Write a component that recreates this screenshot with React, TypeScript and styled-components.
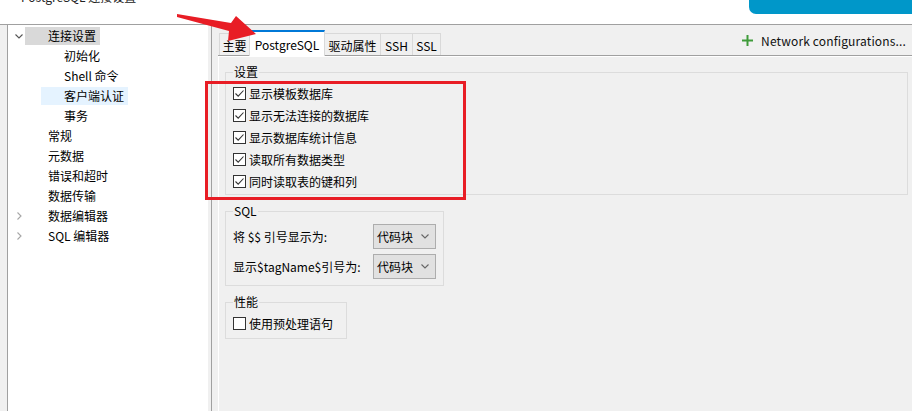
import React from 'react'
import styled, { createGlobalStyle } from 'styled-components'

const GlobalStyle = createGlobalStyle`
    html, body {
        margin: 0;
        padding: 0;
        background: #f0f0f0;
    }
    body {
        font-family: "Noto Sans CJK SC", "Noto Sans", sans-serif;
        font-size: 12px;
        color: #000;
    }
`

const Page = styled.div`
    position: relative;
    width: 912px;
    height: 411px;
    overflow: hidden;
    display: flex;
    flex-direction: column;
    background: #f0f0f0;
`

const Header = styled.div`
    height: 24px;
    flex: none;
    display: flex;
    align-items: flex-start;
    overflow: hidden;
    background: #fff;
    border-bottom: 1px solid #a0a0a0;
`

const Title = styled.div`
    margin: -11px 0 0 21px;
    line-height: 16px;
    color: #222;
`

const Banner = styled.div`
    margin-left: auto;
    width: 163px;
    height: 14px;
    background: #0097c9;
    border-bottom-left-radius: 7px;
`

const Main = styled.div`
    flex: 1;
    display: flex;
    min-height: 0;
`

const Gutter = styled.div`
    width: 7px;
    flex: none;
`

const Tree = styled.div`
    width: 200px;
    flex: none;
    background: #fff;
    border-left: 1px solid #a0a0a0;
    padding-top: 1px;
`

const TreeRow = styled.div<{ $level: number }>`
    height: 20px;
    display: flex;
    align-items: center;
    padding-left: ${(p) => 7 + p.$level * 16}px;
`

const Twisty = styled.span`
    width: 10px;
    height: 20px;
    flex: none;
    display: flex;
    align-items: center;
`

const TreeLabel = styled.span<{ $sel?: 'focus' | 'blur' }>`
    height: 18px;
    line-height: 18px;
    padding: 0 4px 0 23px;
    white-space: nowrap;
    background: ${(p) => (p.$sel === 'blur' ? '#d9d9d9' : p.$sel === 'focus' ? '#e5f3ff' : 'transparent')};
`

const Sash = styled.div`
    width: 10px;
    flex: none;
    background: linear-gradient(to right, #f0f0f0 3px, #a0a0a0 3px, #a0a0a0 4px, #f0f0f0 4px);
`

const Editor = styled.div`
    flex: 1;
    display: flex;
    flex-direction: column;
    min-width: 0;
`

const TabBar = styled.div`
    height: 30px;
    flex: none;
    display: flex;
    align-items: flex-end;
    padding-left: 2px;
    border-bottom: 1px solid #a0a0a0;
`

const Tab = styled.div<{ $active?: boolean; $w: number }>`
    width: ${(p) => p.$w}px;
    box-sizing: border-box;
    height: ${(p) => (p.$active ? 26 : 22)}px;
    margin-bottom: ${(p) => (p.$active ? -1 : 0)}px;
    margin-left: -1px;
    display: flex;
    align-items: center;
    justify-content: center;
    padding-top: ${(p) => (p.$active ? 0 : 1)}px;
    border: 1px solid #d9d9d9;
    border-bottom: none;
    border-top: ${(p) => (p.$active ? '2px solid #0078d7' : '1px solid #d9d9d9')};
    background: ${(p) => (p.$active ? '#fff' : '#f0f0f0')};
    position: ${(p) => (p.$active ? 'relative' : 'static')};
    white-space: nowrap;
`

const NetButton = styled.div`
    margin-left: auto;
    align-self: center;
    display: flex;
    align-items: center;
    gap: 8px;
    padding-right: 6px;
    color: #111;
    letter-spacing: 0.15px;
`

const TabBody = styled.div`
    flex: 1;
    display: flex;
    flex-direction: column;
    align-items: flex-start;
    gap: 8px;
    border-top: 1px solid #fff;
    border-left: 1px solid #fff;
    padding: 7px 4px 0 6px;
`

const Group = styled.fieldset<{ $w?: number; $gap?: number }>`
    margin: 0;
    margin-top: ${(p) => p.$gap ?? 0}px;
    padding: 0 7px;
    border: 1px solid #dcdcdc;
    box-sizing: border-box;
    width: ${(p) => (p.$w ? `${p.$w}px` : '100%')};
    align-self: ${(p) => (p.$w ? 'flex-start' : 'stretch')};
    min-inline-size: 0;
`

const Legend = styled.legend`
    padding: 0 1px;
    line-height: 16px;
    font-size: 12px;
`

const Rows = styled.div<{ $pt: number; $pb: number }>`
    display: flex;
    flex-direction: column;
    padding: ${(p) => p.$pt}px 0 ${(p) => p.$pb}px;
`

const CheckRow = styled.div`
    height: 22px;
    display: flex;
    align-items: center;
    gap: 3px;
    white-space: nowrap;
`

const Box = styled.span`
    width: 13px;
    height: 13px;
    box-sizing: border-box;
    border: 1px solid #333;
    background: #fff;
    flex: none;
    display: flex;
    align-items: center;
    justify-content: center;
`

const FormGrid = styled.div`
    display: grid;
    grid-template-columns: 140px 63px;
    row-gap: 5px;
    align-items: center;
    padding: 5px 0 6px;
`

const Combo = styled.div`
    height: 25px;
    box-sizing: border-box;
    border: 1px solid #adadad;
    background: #e1e1e1;
    display: flex;
    align-items: center;
    justify-content: space-between;
    padding: 0 6px 0 3px;
`

const RedBox = styled.div`
    position: absolute;
    left: 205px;
    top: 81px;
    width: 261px;
    height: 119px;
    box-sizing: border-box;
    border: 3px solid #e81d25;
    pointer-events: none;
`

const ArrowLayer = styled.svg`
    position: absolute;
    left: 170px;
    top: 6px;
    pointer-events: none;
`

function ChevronDown({ color = '#555' }: { color?: string }) {
    return (
        <svg width="8" height="5" viewBox="0 0 8 5">
            <polyline points="0.5,0.5 4,4 7.5,0.5" fill="none" stroke={color} strokeWidth="1.1" />
        </svg>
    )
}

function ChevronRight() {
    return (
        <svg width="5" height="8" viewBox="0 0 5 8" style={{ marginLeft: 2 }}>
            <polyline points="0.5,0.5 4,4 0.5,7.5" fill="none" stroke="#a6a6a6" strokeWidth="1.1" />
        </svg>
    )
}

function Check({ checked }: { checked: boolean }) {
    return (
        <Box>
            {checked ? (
                <svg width="11" height="11" viewBox="0 0 11 11">
                    <polyline points="1.5,5.5 4.2,8.2 9.5,2.5" fill="none" stroke="#333" strokeWidth="1.1" />
                </svg>
            ) : null}
        </Box>
    )
}

type Node = { label: string; level: number; twisty?: 'open' | 'closed'; sel?: 'focus' | 'blur' }

const nodes: Node[] = [
    { label: '连接设置', level: 0, twisty: 'open', sel: 'blur' },
    { label: '初始化', level: 1 },
    { label: 'Shell 命令', level: 1 },
    { label: '客户端认证', level: 1, sel: 'focus' },
    { label: '事务', level: 1 },
    { label: '常规', level: 0 },
    { label: '元数据', level: 0 },
    { label: '错误和超时', level: 0 },
    { label: '数据传输', level: 0 },
    { label: '数据编辑器', level: 0, twisty: 'closed' },
    { label: 'SQL 编辑器', level: 0, twisty: 'closed' },
]

const tabs = [
    { label: '主要', w: 31 },
    { label: 'PostgreSQL', w: 76, active: true },
    { label: '驱动属性', w: 57 },
    { label: 'SSH', w: 33 },
    { label: 'SSL', w: 29 },
]

const options = ['显示模板数据库', '显示无法连接的数据库', '显示数据库统计信息', '读取所有数据类型', '同时读取表的键和列']

export default function App() {
    return (
        <>
            <GlobalStyle />
            <Page>
                <Header>
                    <Title>PostgreSQL 连接设置</Title>
                    <Banner />
                </Header>
                <Main>
                    <Gutter />
                    <Tree>
                        {nodes.map((n) => (
                            <TreeRow key={n.label} $level={n.level}>
                                <Twisty>
                                    {n.twisty === 'open' ? <ChevronDown /> : n.twisty === 'closed' ? <ChevronRight /> : null}
                                </Twisty>
                                <TreeLabel $sel={n.sel}>{n.label}</TreeLabel>
                            </TreeRow>
                        ))}
                    </Tree>
                    <Sash />
                    <Editor>
                        <TabBar>
                            {tabs.map((t) => (
                                <Tab key={t.label} $w={t.w} $active={t.active}>
                                    {t.label}
                                </Tab>
                            ))}
                            <NetButton>
                                <svg width="11" height="11" viewBox="0 0 11 11">
                                    <path d="M5.5 0v11M0 5.5h11" stroke="#3f9b3a" strokeWidth="2" />
                                </svg>
                                Network configurations...
                            </NetButton>
                        </TabBar>
                        <TabBody>
                            <Group>
                                <Legend>设置</Legend>
                                <Rows $pt={2} $pb={2}>
                                    {options.map((o) => (
                                        <CheckRow key={o}>
                                            <Check checked />
                                            {o}
                                        </CheckRow>
                                    ))}
                                </Rows>
                            </Group>
                            <Group $w={219}>
                                <Legend>SQL</Legend>
                                <FormGrid>
                                    <span>将 $$ 引号显示为:</span>
                                    <Combo>
                                        代码块
                                        <ChevronDown color="#666" />
                                    </Combo>
                                    <span>显示$tagName$引号为:</span>
                                    <Combo>
                                        代码块
                                        <ChevronDown color="#666" />
                                    </Combo>
                                </FormGrid>
                            </Group>
                            <Group $w={122} $gap={0}>
                                <Legend>性能</Legend>
                                <Rows $pt={2} $pb={4}>
                                    <CheckRow>
                                        <Check checked={false} />
                                        使用预处理语句
                                    </CheckRow>
                                </Rows>
                            </Group>
                        </TabBody>
                    </Editor>
                </Main>
                <RedBox />
                <ArrowLayer width="95" height="42" viewBox="170 6 95 42">
                    <polygon
                        points="177,14 231,23 236,16 256,34 228,41 229,31 177,17"
                        fill="#e81d25"
                    />
                </ArrowLayer>
            </Page>
        </>
    )
}
